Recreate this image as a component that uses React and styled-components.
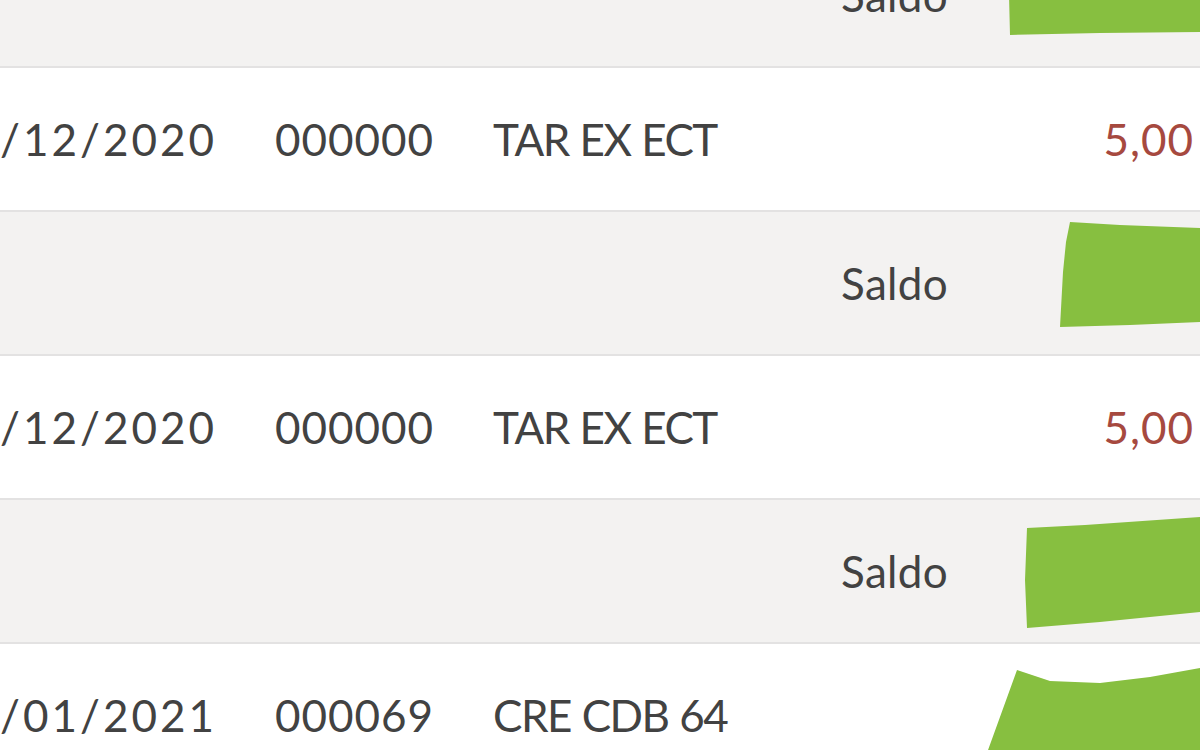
import React from "react";
import styled, { createGlobalStyle } from "styled-components";

const GlobalStyle = createGlobalStyle`
  html, body {
    margin: 0;
    padding: 0;
    background: #ffffff;
    overflow: hidden;
  }
  body {
    font-family: "Lato", "Noto Sans", sans-serif;
  }
`;

const rows = [
  { type: "saldo", mark: "1008,30 1200,30 1200,108 1100,109 1010,111" },
  { type: "entry", date: "15/12/2020", doc: "000000", desc: "TAR EX ECT", value: "5,00" },
  { type: "saldo", mark: "1070,10 1120,13 1200,16 1200,110 1130,113 1060,115 1063,60 1066,30" },
  { type: "entry", date: "16/12/2020", doc: "000000", desc: "TAR EX ECT", value: "5,00" },
  { type: "saldo", mark: "1027,28 1085,25 1200,17 1200,112 1100,122 1027,128 1025,80" },
  {
    type: "entry",
    date: "14/01/2021",
    doc: "000069",
    desc: "CRE CDB 64",
    mark: "1017,26 1050,37 1100,39 1150,33 1200,24 1200,142 975,142",
  },
];

function Scribble({ points }) {
  return (
    <Mark viewBox="0 0 1200 142" preserveAspectRatio="none">
      <polygon points={points} fill="#87bf40" />
    </Mark>
  );
}

export default function App() {
  return (
    <>
      <GlobalStyle />
      <Statement>
        {rows.map((r, i) =>
          r.type === "saldo" ? (
            <SaldoRow key={i}>
              <SaldoLabel>Saldo</SaldoLabel>
              {r.mark && <Scribble points={r.mark} />}
            </SaldoRow>
          ) : (
            <EntryRow key={i}>
              <DateCell>{r.date}</DateCell>
              <Cell>{r.doc}</Cell>
              <Desc>{r.desc}</Desc>
              <Amount>{r.value}</Amount>
              {r.mark && <Scribble points={r.mark} />}
            </EntryRow>
          )
        )}
      </Statement>
    </>
  );
}

const Statement = styled.div`
  display: flex;
  flex-direction: column;
  width: 1200px;
  height: 826px;
  overflow: hidden;
  margin-top: -76px;
`;

const Row = styled.div`
  position: relative;
  flex: 0 0 142px;
  height: 142px;
  border-bottom: 2px solid #e3e2e2;
  display: flex;
  align-items: center;
  color: #424242;
  font-size: 44px;
  overflow: hidden;
`;

const SaldoRow = styled(Row)`
  background: #f3f2f1;
  justify-content: flex-end;
  padding-right: 252px;
`;

const EntryRow = styled(Row)`
  background: #ffffff;
  display: grid;
  grid-template-columns: 275px 218px 1fr auto;
`;

const SaldoLabel = styled.span`
  letter-spacing: 0.3px;
`;

const Cell = styled.span`
  white-space: nowrap;
  letter-spacing: 1px;
`;

const DateCell = styled(Cell)`
  justify-self: end;
  padding-right: 58px;
  letter-spacing: 3px;
`;

const Desc = styled(Cell)`
  letter-spacing: -1.5px;
  word-spacing: 1px;
`;

const Amount = styled(Cell)`
  color: #a6493f;
  padding-right: 6px;
`;

const Mark = styled.svg`
  position: absolute;
  left: 0;
  top: 0;
  width: 1200px;
  height: 142px;
  pointer-events: none;
`;
